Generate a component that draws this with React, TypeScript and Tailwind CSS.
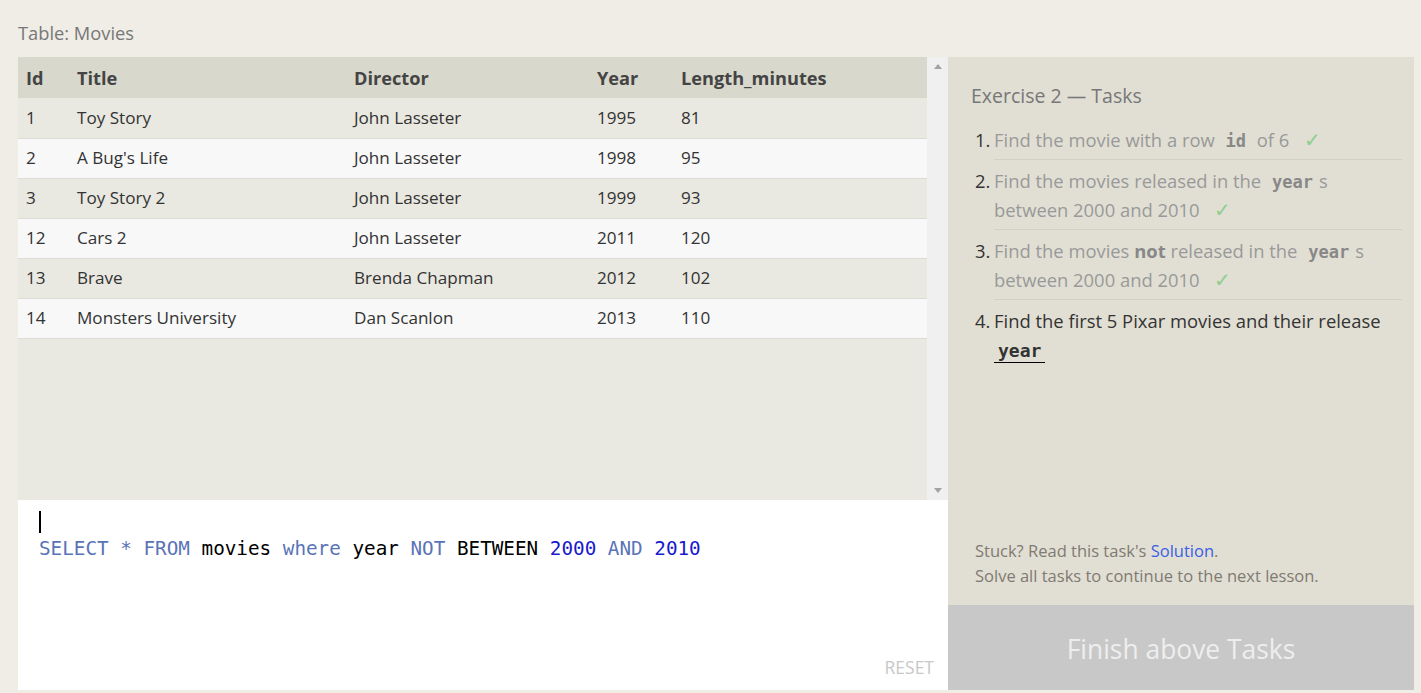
import React from "react";

const movies = [
  { id: 1, title: "Toy Story", director: "John Lasseter", year: 1995, length: 81 },
  { id: 2, title: "A Bug's Life", director: "John Lasseter", year: 1998, length: 95 },
  { id: 3, title: "Toy Story 2", director: "John Lasseter", year: 1999, length: 93 },
  { id: 12, title: "Cars 2", director: "John Lasseter", year: 2011, length: 120 },
  { id: 13, title: "Brave", director: "Brenda Chapman", year: 2012, length: 102 },
  { id: 14, title: "Monsters University", director: "Dan Scanlon", year: 2013, length: 110 },
];

const sans = "font-['Open_Sans','Noto_Sans',sans-serif]";
const mono = "font-['DejaVu_Sans_Mono','Liberation_Mono',monospace]";

export default function App() {
  return (
    <div className={`min-h-[693px] w-[1421px] bg-[#efede6] pl-[18px] pt-[20px] ${sans}`}>
      <div className="h-[37px] text-[18.3px] leading-[26px] text-[#777]">Table: Movies</div>

      <div className="flex">
        {/* left: table + editor */}
        <div className="flex w-[930px] flex-col">
          <div className="flex h-[443px] bg-[#e9e8e1]">
            <div className="flex-1">
              <table className="w-full border-collapse text-left text-[17.1px] text-[#333]">
                <thead>
                  <tr className="h-[41px] bg-[#d9d8cc] text-[18.2px] font-bold text-[#444]">
                    <th className="w-[59px] pl-[8px] pt-[2px]">Id</th>
                    <th className="w-[277px] pt-[2px]">Title</th>
                    <th className="w-[243px] pt-[2px]">Director</th>
                    <th className="w-[84px] pt-[2px]">Year</th>
                    <th className="pt-[2px]">Length_minutes</th>
                  </tr>
                </thead>
                <tbody>
                  {movies.map((m, i) => (
                    <tr key={m.id} className={`h-[40px] border-b border-[#dcdbd5] ${i % 2 ? "bg-[#f8f8f8]" : "bg-[#e9e8e1]"}`}>
                      <td className="pl-[8px]">{m.id}</td>
                      <td>{m.title}</td>
                      <td>{m.director}</td>
                      <td>{m.year}</td>
                      <td>{m.length}</td>
                    </tr>
                  ))}
                </tbody>
              </table>
            </div>
            <div className="flex w-[21px] flex-col items-center justify-between bg-[#f0f0f0] py-[7px]">
              <span className="h-0 w-0 border-x-[4px] border-b-[5px] border-x-transparent border-b-[#a3a3a3]" />
              <span className="h-0 w-0 border-x-[4px] border-t-[5px] border-x-transparent border-t-[#a3a3a3]" />
            </div>
          </div>

          <div className="relative h-[190px] bg-white px-[21px] pt-[11px]">
            <div className="h-[22px] w-[2px] bg-black" />
            <div className={`mt-[4px] whitespace-pre text-[19.3px] leading-[24px] ${mono}`}>
              <span className="text-[#5a73b8]">SELECT * FROM </span>
              <span className="text-black">movies </span>
              <span className="text-[#5a73b8]">where </span>
              <span className="text-black">year </span>
              <span className="text-[#5a73b8]">NOT </span>
              <span className="text-black">BETWEEN </span>
              <span className="text-[#1a1acc]">2000 </span>
              <span className="text-[#5a73b8]">AND </span>
              <span className="text-[#1a1acc]">2010</span>
            </div>
            <div className="absolute bottom-[10px] right-[14px] text-[17.5px] text-[#c8c8c8]">RESET</div>
          </div>
        </div>

        {/* right: tasks */}
        <div className="flex w-[466px] flex-col">
          <div className="flex h-[548px] flex-col justify-between bg-[#e1dfd4] pb-[17px] pl-[23px] pr-[12px] pt-[25px]">
            <div>
              <div className="text-[19.5px] leading-[28px] text-[#777]">Exercise 2 — Tasks</div>
              <ol className="mt-[7px] text-[18.4px] leading-[29px]">
                <Task n={1} done first>
                  Find the movie with a row <Code>id</Code> of 6 <Check />
                </Task>
                <Task n={2} done>
                  Find the movies released in the <Code>year</Code>s between 2000 and 2010 <Check />
                </Task>
                <Task n={3} done>
                  Find the movies <b className="text-[#888]">not</b> released in the <Code>year</Code>s between 2000 and 2010 <Check />
                </Task>
                <Task n={4} last>
                  Find the first 5 Pixar movies and their release{" "}
                  <span className={`inline-block border-b border-black px-[4px] text-[18px] font-bold leading-[22px] text-[#333] ${mono}`}>year</span>
                </Task>
              </ol>
            </div>
            <div className="pl-[4px] text-[16.5px] leading-[25px] text-[#807a72]">
              <div>
                Stuck? Read this task's <span className="text-[#3b5ee6]">Solution</span>.
              </div>
              <div>Solve all tasks to continue to the next lesson.</div>
            </div>
          </div>
          <div className="flex h-[85px] items-center justify-center bg-[#c8c8c8] pt-[5px] text-[26.4px] text-[#eeeeee]">
            Finish above Tasks
          </div>
        </div>
      </div>
    </div>
  );
}

function Task({ n, done, first, last, children }: { n: number; done?: boolean; first?: boolean; last?: boolean; children: React.ReactNode }) {
  const pt = first ? "pt-[8px]" : "pt-[6px]";
  return (
    <li className="flex">
      <span className={`w-[23px] shrink-0 pl-[4px] text-[#333] ${pt}`}>{n}.</span>
      <div className={`flex-1 pb-[5px] ${pt} ${last ? "" : "border-b border-[#d3d1c6]"} ${done ? "text-[#999]" : "text-[#333]"}`}>
        {children}
      </div>
    </li>
  );
}

function Code({ children }: { children: React.ReactNode }) {
  return <span className={`px-[6px] text-[17px] font-bold leading-none text-[#888] ${mono}`}>{children}</span>;
}

function Check() {
  return <span className="ml-[10px] text-[20px] leading-none text-[#8fce8f]">✓</span>;
}
